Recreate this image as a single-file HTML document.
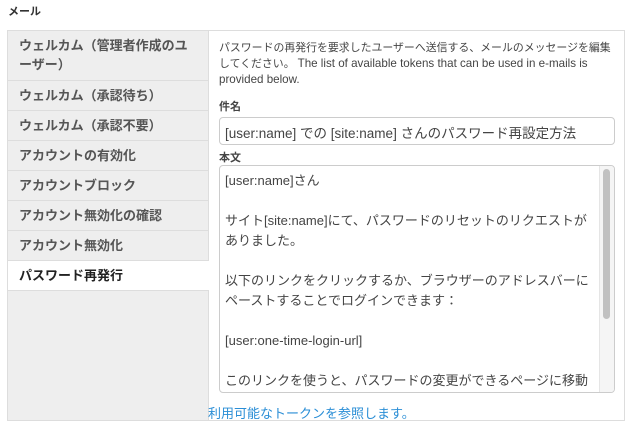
<!DOCTYPE html>
<html><head><meta charset="utf-8"><style>
body{margin:0;width:634px;height:437px;background:#fff;font-family:"Liberation Sans","Noto Sans CJK JP",sans-serif;color:#333;position:relative;overflow:hidden}
.t{position:absolute;left:8px;top:3px;font-size:11px;font-weight:bold;color:#333}
.box{position:absolute;left:7px;top:30px;width:618px;height:391px;border:1px solid #ddd;box-sizing:border-box;background:#fff}
.tabs{position:absolute;left:0;top:0;width:200px;height:389px;background:#eee;border-right:1px solid #ddd}
.tab{border-bottom:1px solid #ddd;padding:6px 10px 7px 11px;font-size:13px;font-weight:bold;color:#555;line-height:17px;height:16px}
.tab.two{height:36px;padding-top:5px;padding-bottom:8px;line-height:19px}
.tab.act{background:#fff;color:#222;margin-right:-1px}
.desc{position:absolute;left:211px;top:10px;width:400px;font-size:10.9px;line-height:15px;color:#444;white-space:nowrap}
.desc .l{font-size:11.6px}
.lbl{position:absolute;left:211px;font-size:11px;font-weight:bold;color:#444}
.inp{position:absolute;left:211px;top:86px;width:396px;height:28px;border:1px solid #ccc;border-radius:4px;box-sizing:border-box;font-size:13.5px;padding:4px 5px;color:#444}
.ta{position:absolute;left:211px;top:134px;width:396px;height:228px;border:1px solid #ccc;border-radius:4px;box-sizing:border-box;font-size:13px;line-height:20px;padding:5px 5px;color:#444;overflow:hidden;white-space:nowrap}
.sb{position:absolute;right:0;top:0;width:14px;height:226px;background:#f5f5f5;border-left:1px solid #e5e5e5}
.th{position:absolute;left:3px;top:3px;width:7px;height:150px;background:#c1c1c1;border-radius:4px}
.link{position:absolute;left:200px;top:372px;font-size:13px;color:#2a8ed6}
</style></head><body>
<div class="t">メール</div>
<div class="box">
<div class="tabs">
<div class="tab two">ウェルカム（管理者作成のユーザー）</div>
<div class="tab">ウェルカム（承認待ち）</div>
<div class="tab">ウェルカム（承認不要）</div>
<div class="tab">アカウントの有効化</div>
<div class="tab">アカウントブロック</div>
<div class="tab">アカウント無効化の確認</div>
<div class="tab">アカウント無効化</div>
<div class="tab act">パスワード再発行</div>
</div>
<div class="desc">パスワードの再発行を要求したユーザーへ送信する、メールのメッセージを編集<br>してください。 <span class="l">The list of available tokens that can be used in e-mails is</span><br><span class="l">provided below.</span></div>
<div class="lbl" style="top:67px">件名</div>
<div class="inp">[user:name] での [site:name] さんのパスワード再設定方法</div>
<div class="lbl" style="top:118px">本文</div>
<div class="ta">[user:name]さん<br><br>サイト[site:name]にて、パスワードのリセットのリクエストが<br>ありました。<br><br>以下のリンクをクリックするか、ブラウザーのアドレスバーに<br>ペーストすることでログインできます：<br><br>[user:one-time-login-url]<br><br>このリンクを使うと、パスワードの変更ができるページに移動
<div class="sb"><div class="th"></div></div></div>
<div class="link">利用可能なトークンを参照します。</div>
</div>
</body></html>
